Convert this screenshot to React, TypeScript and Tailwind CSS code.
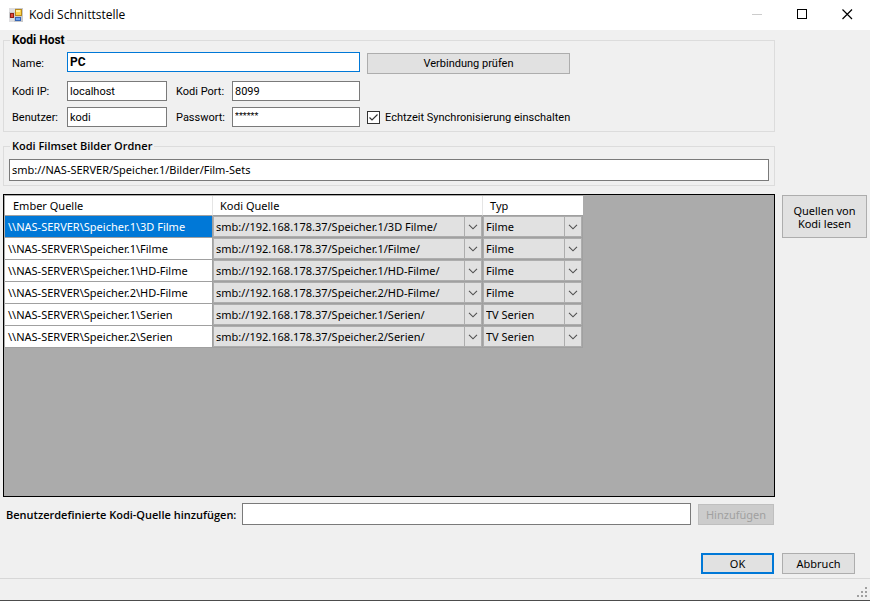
import { useState, type ReactNode } from 'react';
import clsx from 'clsx';

interface SourceRow {
  ember: string;
  kodi: string;
  type: string;
}

const SOURCES: SourceRow[] = [
  { ember: '\\\\NAS-SERVER\\Speicher.1\\3D Filme', kodi: 'smb://192.168.178.37/Speicher.1/3D Filme/', type: 'Filme' },
  { ember: '\\\\NAS-SERVER\\Speicher.1\\Filme', kodi: 'smb://192.168.178.37/Speicher.1/Filme/', type: 'Filme' },
  { ember: '\\\\NAS-SERVER\\Speicher.1\\HD-Filme', kodi: 'smb://192.168.178.37/Speicher.1/HD-Filme/', type: 'Filme' },
  { ember: '\\\\NAS-SERVER\\Speicher.2\\HD-Filme', kodi: 'smb://192.168.178.37/Speicher.2/HD-Filme/', type: 'Filme' },
  { ember: '\\\\NAS-SERVER\\Speicher.1\\Serien', kodi: 'smb://192.168.178.37/Speicher.1/Serien/', type: 'TV Serien' },
  { ember: '\\\\NAS-SERVER\\Speicher.2\\Serien', kodi: 'smb://192.168.178.37/Speicher.2/Serien/', type: 'TV Serien' },
];

const KODI_PATHS = SOURCES.map((s) => s.kodi);
const TYPES = ['Filme', 'TV Serien'];

const field = 'w-full min-w-0 border border-[#7a7a7a] bg-white px-[2px] outline-none';
const button = 'border border-[#adadad] bg-[#e1e1e1] text-center';

function AppIcon() {
  return (
    <svg width="14" height="14" viewBox="0 0 14 14" aria-hidden="true">
      <rect width="14" height="14" fill="#c9c9cb" />
      <path d="M0 0h6v4H0zM0 10h5v4H0z" fill="#dedee0" />
      <rect x="6.5" y="1.5" width="6" height="6" fill="#fbd34b" stroke="#b98a1c" />
      <path d="M7 2h4v2H7z" fill="#fff0a4" />
      <rect x="1.5" y="5.5" width="3" height="4" fill="#e2483a" stroke="#8f1f17" />
      <rect x="6.5" y="9.5" width="5" height="3" fill="#6fa3f0" stroke="#3565b5" />
    </svg>
  );
}

function TitleBar() {
  return (
    <header className="flex h-[30px] items-center bg-white pl-[9px]">
      <AppIcon />
      <h1 className="ml-[6px] flex-1 font-['Open_Sans','Noto_Sans',sans-serif] text-[12px] leading-[16px]">
        Kodi Schnittstelle
      </h1>
      <button type="button" disabled aria-label="Minimieren" className="flex h-full w-[45px] items-center justify-center">
        <svg width="11" height="12" shapeRendering="crispEdges">
          <path d="M0 5h10v1H0z" fill="#cccccc" />
        </svg>
      </button>
      <button type="button" aria-label="Maximieren" className="flex h-full w-[45px] items-center justify-center">
        <svg width="11" height="12" shapeRendering="crispEdges">
          <rect x="0.5" y="0.5" width="9" height="9" fill="none" stroke="#000" />
        </svg>
      </button>
      <button type="button" aria-label="Schließen" className="flex h-full w-[45px] items-center justify-center">
        <svg width="11" height="12">
          <path d="M.5 .5l9.5 9.5M10 .5L.5 10" stroke="#000" strokeWidth="1.2" />
        </svg>
      </button>
    </header>
  );
}

function GroupBox({ title, className, children }: { title: string; className?: string; children: ReactNode }) {
  return (
    <fieldset className={clsx('min-w-0 border border-[#dcdcdc]', className)}>
      <legend className="ml-[6px] px-[2px] leading-[14px]">{title}</legend>
      {children}
    </fieldset>
  );
}

function GridSelect({ label, value, options }: { label: string; value: string; options: string[] }) {
  return (
    <div className="relative h-[21px]">
      <select
        aria-label={label}
        defaultValue={value}
        className="block h-full w-full appearance-none border border-[#adadad] bg-[#e1e1e1] pr-[18px] pl-[2px] outline-none"
      >
        {options.map((o) => (
          <option key={o}>{o}</option>
        ))}
      </select>
      <span className="pointer-events-none absolute inset-y-0 right-0 flex w-[18px] items-center justify-center border-x border-[#adadad]">
        <svg width="10" height="6" viewBox="0 0 10 6" aria-hidden="true">
          <path d="M1 .8l4 4 4-4" fill="none" stroke="#505050" strokeWidth="1.1" />
        </svg>
      </span>
    </div>
  );
}

function SourceGrid() {
  const [selected, setSelected] = useState(0);

  return (
    <div className="min-h-[303px] flex-1 border border-black bg-[#ababab] pt-px pl-px">
      <table className="w-[578px] table-fixed border-separate border-spacing-0">
        <colgroup>
          <col className="w-[208px]" />
          <col className="w-[270px]" />
          <col className="w-[100px]" />
        </colgroup>
        <thead>
          <tr className="h-[20px] bg-white text-left">
            <th className="border-r border-b border-r-[#e5e5e5] border-b-[#a0a0a0] p-0 pl-[8px] font-normal">Ember Quelle</th>
            <th className="border-r border-b border-r-[#e5e5e5] border-b-[#a0a0a0] p-0 pl-[7px] font-normal">Kodi Quelle</th>
            <th className="border-b border-b-[#a0a0a0] p-0 pl-[7px] font-normal">Typ</th>
          </tr>
        </thead>
        <tbody>
          {SOURCES.map((row, i) => (
            <tr key={row.ember} onClick={() => setSelected(i)} className="h-[22px]">
              <td
                className={clsx(
                  'border-r border-b border-[#a0a0a0] p-0 pl-[3px]',
                  i === selected ? 'bg-[#0078d7] text-white' : 'bg-white',
                )}
              >
                {row.ember}
              </td>
              <td className="border-r border-b border-[#a0a0a0] p-0">
                <GridSelect label="Kodi Quelle" value={row.kodi} options={KODI_PATHS} />
              </td>
              <td className="border-r border-b border-[#a0a0a0] p-0">
                <GridSelect label="Typ" value={row.type} options={TYPES} />
              </td>
            </tr>
          ))}
        </tbody>
      </table>
    </div>
  );
}

function HostSettings() {
  return (
    <GroupBox title="Kodi Host" className="pb-[4px] font-['Roboto','Liberation_Sans',sans-serif] [&>legend]:text-[12px] [&>legend]:font-bold">
      <div className="grid grid-cols-[48px_100px_51px_128px_1fr] grid-rows-[23px_20px_20px] items-center gap-x-[7px] gap-y-[6px] pt-[5px] pr-[4px] pl-[8px]">
        <label htmlFor="name">Name:</label>
        <input
          id="name"
          defaultValue="PC"
          className="col-span-3 h-[20px] w-full self-start border border-[#0078d7] bg-white px-[2px] text-[12px] font-bold outline-none"
        />
        <button type="button" className={clsx(button, 'h-[21px] w-[203px]')}>Verbindung prüfen</button>

        <label htmlFor="ip">Kodi IP:</label>
        <input id="ip" defaultValue="localhost" className={clsx(field, 'h-[20px]')} />
        <label htmlFor="port" className="pl-[2px] whitespace-nowrap">Kodi Port:</label>
        <input id="port" defaultValue="8099" className={clsx(field, 'h-[20px]')} />
        <span />

        <label htmlFor="user">Benutzer:</label>
        <input id="user" defaultValue="kodi" className={clsx(field, 'h-[20px]')} />
        <label htmlFor="pass" className="pl-[2px] whitespace-nowrap">Passwort:</label>
        <input id="pass" defaultValue="******" className={clsx(field, 'h-[20px] pb-[2px] text-[9px]')} />
        <label className="flex items-center gap-[5px]">
          <span className="grid size-[13px] place-items-center">
            <input type="checkbox" defaultChecked className="peer col-start-1 row-start-1 size-[13px] appearance-none border border-[#333] bg-white" />
            <svg width="11" height="11" viewBox="0 0 11 11" aria-hidden="true" className="pointer-events-none invisible col-start-1 row-start-1 peer-checked:visible">
              <path d="M1.5 5.5l2.5 2.5 5.5-5.5" fill="none" stroke="#333" strokeWidth="1.2" />
            </svg>
          </span>
          Echtzeit Synchronisierung einschalten
        </label>
      </div>
    </GroupBox>
  );
}

export default function App() {
  return (
    <div className="flex min-h-screen flex-col border-b border-[#4c4c4c] bg-[#f0f0f0] font-['Noto_Sans','Open_Sans',sans-serif] text-[11px] leading-[13px] text-black">
      <TitleBar />

      <main className="flex flex-1 flex-col pt-[3px] pb-[4px] pl-[3px]">
        <div className="flex flex-1 gap-[7px] pr-[3px]">
          <div className="flex min-w-0 flex-1 flex-col">
            <HostSettings />

            <GroupBox
              title="Kodi Filmset Bilder Ordner"
              className="mt-[7px] pb-[4px] [&>legend]:font-['Open_Sans','Noto_Sans',sans-serif] [&>legend]:font-semibold"
            >
              <div className="px-[5px] pt-[6px]">
                <input
                  aria-label="Kodi Filmset Bilder Ordner"
                  defaultValue="smb://NAS-SERVER/Speicher.1/Bilder/Film-Sets"
                  className={clsx(field, 'h-[22px] pb-px')}
                />
              </div>
            </GroupBox>

            <div className="mt-[8px] flex flex-1 flex-col">
              <SourceGrid />
            </div>

            <form className="mt-[6px] flex items-center pr-px pl-[3px]" onSubmit={(e) => e.preventDefault()}>
              <label htmlFor="custom" className="w-[236px] shrink-0 font-['Open_Sans','Noto_Sans',sans-serif] font-semibold whitespace-nowrap">
                Benutzerdefinierte Kodi-Quelle hinzufügen:
              </label>
              <input id="custom" className={clsx(field, 'h-[22px] flex-1')} />
              <button disabled className="ml-[7px] h-[21px] w-[76px] border border-[#bfbfbf] bg-[#cccccc] text-[#a0a0a0]">
                Hinzufügen
              </button>
            </form>
          </div>

          <button type="button" className={clsx(button, 'mt-[162px] h-[43px] w-[85px] self-start')}>
            Quellen von Kodi lesen
          </button>
        </div>

        <div className="mt-[28px] flex justify-end gap-[8px] pr-[15px]">
          <button type="button" className="h-[21px] w-[73px] border-2 border-[#0078d7] bg-[#e1e1e1]">OK</button>
          <button type="button" className={clsx(button, 'h-[21px] w-[73px]')}>Abbruch</button>
        </div>
      </main>

      <footer className="flex h-[22px] items-end justify-end border-t border-[#d7d7d7] pr-[2px] pb-[2px]">
        <svg width="11" height="11" viewBox="0 0 11 11" fill="#a0a0a0" shapeRendering="crispEdges" aria-hidden="true">
          <path d="M8 0h2v2H8zM4 4h2v2H4zM8 4h2v2H8zM0 8h2v2H0zM4 8h2v2H4zM8 8h2v2H8z" />
        </svg>
      </footer>
    </div>
  );
}
